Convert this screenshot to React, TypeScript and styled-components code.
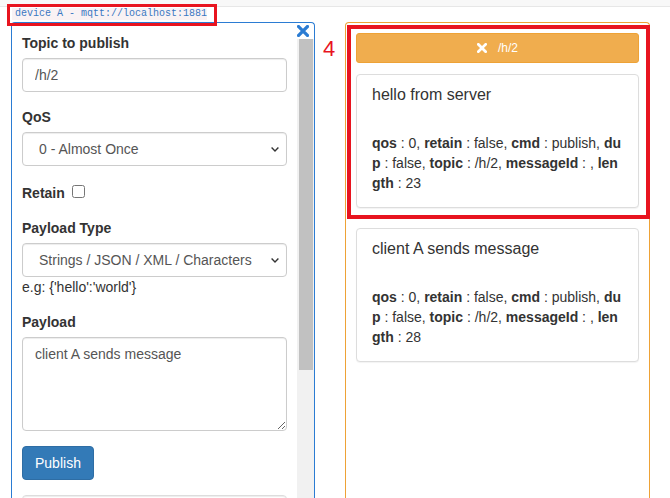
import React from 'react';
import styled, { createGlobalStyle } from 'styled-components';

const GlobalStyle = createGlobalStyle`
  html, body { margin: 0; padding: 0; background: #fff; overflow: hidden; }
  body {
    font-family: "Liberation Sans", Arial, Helvetica, sans-serif;
    font-size: 14px;
    line-height: 1.42857;
    color: #333;
  }
  *, *::before, *::after { box-sizing: border-box; }
`;

const RED = '#e8141f';

const Page = styled.div`
  width: 670px;
  height: 498px;
  overflow: hidden;
`;

const TopBar = styled.div`
  height: 7px;
  background: #f8f8f8;
  border-bottom: 1px solid #e7e7e7;
`;

const TagRow = styled.div`
  display: flex;
  height: 15px;
  padding: 1px 0 2px 12px;
`;

const DeviceTag = styled.code`
  position: relative;
  display: block;
  height: 12px;
  padding: 0 0 0 3px;
  font-family: "Liberation Mono", "DejaVu Sans Mono", monospace;
  font-size: 10px;
  line-height: 12px;
  color: #3a78c2;
  background: #f9f2f4;
  white-space: nowrap;

  &::after {
    content: '';
    position: absolute;
    left: -5px;
    top: -4px;
    right: -10px;
    bottom: -6px;
    border: 3px solid ${RED};
  }
`;

const PanelsRow = styled.div`
  display: flex;
  align-items: flex-start;
  gap: 30px;
  padding-left: 11px;
`;

const LeftPanel = styled.div`
  display: flex;
  width: 304px;
  height: 520px;
  border: 1px solid #2b7cd3;
  border-bottom: none;
  border-radius: 4px 4px 0 0;
`;

const Form = styled.div`
  flex: 1;
  min-width: 0;
  padding: 10px;
`;

const FormGroup = styled.div`
  margin-bottom: 15px;
`;

const Label = styled.label`
  display: inline-block;
  margin-bottom: 5px;
  font-weight: bold;
  line-height: 20px;
`;

const CheckLabel = styled.label`
  display: block;
  font-weight: bold;
  line-height: 20px;
`;

const Check = styled.input`
  width: 13px;
  height: 13px;
  margin: 4px 0 0 3px;
  vertical-align: baseline;
`;

const controlBase = `
  display: block;
  width: 100%;
  font-family: "Liberation Sans", Arial, Helvetica, sans-serif;
  font-size: 14px;
  line-height: 20px;
  color: #555;
  background: #fff;
  border: 1px solid #ccc;
  border-radius: 4px;
  box-shadow: inset 0 1px 1px rgba(0, 0, 0, 0.075);
  outline: none;
`;

const TextInput = styled.input<{ $light?: boolean }>`
  ${controlBase}
  height: 34px;
  padding: 6px 12px;
  border-color: ${(p) => (p.$light ? '#ddd' : '#ccc')};
`;

const SelectWrap = styled.div`
  position: relative;
`;

const Select = styled.select`
  ${controlBase}
  height: 34px;
  padding: 6px 28px 6px 16px;
  appearance: none;
  -webkit-appearance: none;
`;

const Chevron = styled.svg`
  position: absolute;
  right: 8px;
  top: 15px;
  pointer-events: none;
`;

const HelpText = styled.div`
  line-height: 20px;
  color: #333;
`;

const TextArea = styled.textarea`
  ${controlBase}
  height: 94px;
  padding: 6px 12px;
  resize: vertical;
`;

const PrimaryButton = styled.button`
  display: inline-block;
  height: 34px;
  padding: 6px 12px;
  font-family: "Liberation Sans", Arial, Helvetica, sans-serif;
  font-size: 14px;
  line-height: 20px;
  color: #fff;
  background: #337ab7;
  border: 1px solid #2e6da4;
  border-radius: 4px;
`;

const Rail = styled.div`
  display: flex;
  flex-direction: column;
  width: 17px;
`;

const RailTop = styled.div`
  height: 16px;
  padding-top: 2px;
`;

const Track = styled.div`
  flex: 1;
  background: #f1f1f1;
  padding: 0 1px 0 2px;
`;

const Thumb = styled.div`
  height: 331px;
  background: #c1c1c1;
`;

const RightPanel = styled.div`
  position: relative;
  width: 305px;
  height: 520px;
  padding: 10px;
  border: 1px solid #eea236;
  border-bottom: none;
  border-radius: 4px 4px 0 0;
`;

const TopicButton = styled.div`
  display: flex;
  align-items: center;
  justify-content: center;
  height: 30px;
  margin-bottom: 11px;
  font-size: 12px;
  line-height: 18px;
  color: #fff;
  background: #f0ad4e;
  border: 1px solid #eea236;
  border-radius: 3px;
`;

const TopicText = styled.span`
  margin-left: 11px;
`;

const Card = styled.div`
  margin-bottom: 20px;
  padding: 10px 15px 14px;
  background: #fff;
  border: 1px solid #ddd;
  border-radius: 4px;
  box-shadow: 0 1px 1px rgba(0, 0, 0, 0.05);
`;

const CardTitle = styled.div`
  font-size: 16px;
  line-height: 20px;
  margin-bottom: 28px;
  color: #333;
`;

const Meta = styled.div`
  font-size: 14px;
  line-height: 20px;
  word-break: break-all;
  color: #333;

  b { font-weight: bold; }
`;

const StepNumber = styled.div`
  position: absolute;
  left: -23px;
  top: 15px;
  font-size: 22px;
  line-height: 22px;
  color: ${RED};
`;

const Highlight = styled.div`
  position: absolute;
  left: 1px;
  top: 2px;
  width: 303px;
  height: 194px;
  border: 4px solid ${RED};
  pointer-events: none;
`;

const CloseIcon = ({ size, color }: { size: number; color: string }) => (
  <svg width={size} height={size} viewBox="0 0 10 10" style={{ display: 'block' }}>
    <path d="M1.3 1.3 L8.7 8.7 M8.7 1.3 L1.3 8.7" stroke={color} strokeWidth="2.7" strokeLinecap="square" fill="none" />
  </svg>
);

const ChevronIcon = () => (
  <Chevron width="8" height="5" viewBox="0 0 8 5">
    <path d="M0.6 0.6 L4 4 L7.4 0.6" stroke="#333" strokeWidth="1.4" fill="none" />
  </Chevron>
);

type Msg = { body: string; length: number };

const messages: Msg[] = [
  { body: 'hello from server', length: 23 },
  { body: 'client A sends message', length: 28 },
];

const MessageCard = ({ msg }: { msg: Msg }) => (
  <Card>
    <CardTitle>{msg.body}</CardTitle>
    <Meta>
      <b>qos</b> : 0, <b>retain</b> : false, <b>cmd</b> : publish, <b>dup</b> : false, <b>topic</b> : /h/2,{' '}
      <b>messageId</b> : , <b>length</b> : {msg.length}
    </Meta>
  </Card>
);

export default function App() {
  return (
    <Page>
      <GlobalStyle />
      <TopBar />
      <TagRow>
        <DeviceTag>device A - mqtt://localhost:1881</DeviceTag>
      </TagRow>
      <PanelsRow>
        <LeftPanel>
          <Form>
            <FormGroup>
              <Label>Topic to publish</Label>
              <TextInput defaultValue="/h/2" />
            </FormGroup>
            <FormGroup>
              <Label>QoS</Label>
              <SelectWrap>
                <Select defaultValue="0">
                  <option value="0">0 - Almost Once</option>
                  <option value="1">1 - At Least Once</option>
                  <option value="2">2 - Exactly Once</option>
                </Select>
                <ChevronIcon />
              </SelectWrap>
            </FormGroup>
            <FormGroup>
              <CheckLabel>
                Retain <Check type="checkbox" />
              </CheckLabel>
            </FormGroup>
            <FormGroup>
              <Label>Payload Type</Label>
              <SelectWrap>
                <Select defaultValue="s">
                  <option value="s">Strings / JSON / XML / Characters</option>
                  <option value="b">Buffer</option>
                </Select>
                <ChevronIcon />
              </SelectWrap>
              <HelpText>e.g: {"{'hello':'world'}"}</HelpText>
            </FormGroup>
            <FormGroup>
              <Label>Payload</Label>
              <TextArea defaultValue="client A sends message" />
            </FormGroup>
            <FormGroup>
              <PrimaryButton>Publish</PrimaryButton>
            </FormGroup>
            <FormGroup>
              <TextInput $light />
            </FormGroup>
          </Form>
          <Rail>
            <RailTop>
              <CloseIcon size={12} color="#2b7cd3" />
            </RailTop>
            <Track>
              <Thumb />
            </Track>
          </Rail>
        </LeftPanel>
        <RightPanel>
          <StepNumber>4</StepNumber>
          <TopicButton>
            <CloseIcon size={10} color="#fff" />
            <TopicText>/h/2</TopicText>
          </TopicButton>
          {messages.map((m) => (
            <MessageCard key={m.body} msg={m} />
          ))}
          <Highlight />
        </RightPanel>
      </PanelsRow>
    </Page>
  );
}
